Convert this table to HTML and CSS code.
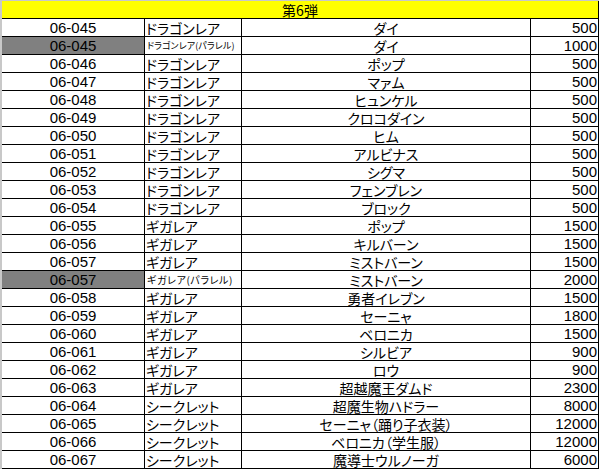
FILE: index.html
```
<!DOCTYPE html>
<html lang="ja">
<head>
<meta charset="utf-8">
<link rel="stylesheet" href="styles.css">
</head>
<body>
<div class="frame">
<div class="head">第6弾</div>
<div class="row"><div class="no">06-045</div><div class="rar">ドラゴンレア</div><div class="name">ダイ</div><div class="pr">500</div></div>
<div class="row"><div class="no par">06-045</div><div class="rar xs">ドラゴンレア(パラレル)</div><div class="name">ダイ</div><div class="pr">1000</div></div>
<div class="row"><div class="no">06-046</div><div class="rar">ドラゴンレア</div><div class="name">ポップ</div><div class="pr">500</div></div>
<div class="row"><div class="no">06-047</div><div class="rar">ドラゴンレア</div><div class="name">マァム</div><div class="pr">500</div></div>
<div class="row"><div class="no">06-048</div><div class="rar">ドラゴンレア</div><div class="name">ヒュンケル</div><div class="pr">500</div></div>
<div class="row"><div class="no">06-049</div><div class="rar">ドラゴンレア</div><div class="name">クロコダイン</div><div class="pr">500</div></div>
<div class="row"><div class="no">06-050</div><div class="rar">ドラゴンレア</div><div class="name">ヒム</div><div class="pr">500</div></div>
<div class="row"><div class="no">06-051</div><div class="rar">ドラゴンレア</div><div class="name">アルビナス</div><div class="pr">500</div></div>
<div class="row"><div class="no">06-052</div><div class="rar">ドラゴンレア</div><div class="name">シグマ</div><div class="pr">500</div></div>
<div class="row"><div class="no">06-053</div><div class="rar">ドラゴンレア</div><div class="name">フェンブレン</div><div class="pr">500</div></div>
<div class="row"><div class="no">06-054</div><div class="rar">ドラゴンレア</div><div class="name">ブロック</div><div class="pr">500</div></div>
<div class="row"><div class="no">06-055</div><div class="rar">ギガレア</div><div class="name">ポップ</div><div class="pr">1500</div></div>
<div class="row"><div class="no">06-056</div><div class="rar">ギガレア</div><div class="name">キルバーン</div><div class="pr">1500</div></div>
<div class="row"><div class="no">06-057</div><div class="rar">ギガレア</div><div class="name">ミストバーン</div><div class="pr">1500</div></div>
<div class="row"><div class="no par">06-057</div><div class="rar sm">ギガレア(パラレル)</div><div class="name">ミストバーン</div><div class="pr">2000</div></div>
<div class="row"><div class="no">06-058</div><div class="rar">ギガレア</div><div class="name">勇者イレブン</div><div class="pr">1500</div></div>
<div class="row"><div class="no">06-059</div><div class="rar">ギガレア</div><div class="name">セーニャ</div><div class="pr">1800</div></div>
<div class="row"><div class="no">06-060</div><div class="rar">ギガレア</div><div class="name">ベロニカ</div><div class="pr">1500</div></div>
<div class="row"><div class="no">06-061</div><div class="rar">ギガレア</div><div class="name">シルビア</div><div class="pr">900</div></div>
<div class="row"><div class="no">06-062</div><div class="rar">ギガレア</div><div class="name">ロウ</div><div class="pr">900</div></div>
<div class="row"><div class="no">06-063</div><div class="rar">ギガレア</div><div class="name">超越魔王ダムド</div><div class="pr">2300</div></div>
<div class="row"><div class="no">06-064</div><div class="rar">シークレット</div><div class="name">超魔生物ハドラー</div><div class="pr">8000</div></div>
<div class="row"><div class="no">06-065</div><div class="rar">シークレット</div><div class="name">セーニャ（踊り子衣装）</div><div class="pr">12000</div></div>
<div class="row"><div class="no">06-066</div><div class="rar">シークレット</div><div class="name">ベロニカ（学生服）</div><div class="pr">12000</div></div>
<div class="row"><div class="no">06-067</div><div class="rar">シークレット</div><div class="name">魔導士ウルノーガ</div><div class="pr">6000</div></div>
</div>
</body>
</html>
```
FILE: styles.css
```
html, body {
  margin: 0;
  padding: 0;
  background: #ffffff;
}
body {
  font-family: "Noto Sans CJK JP", "Liberation Sans", sans-serif;
  color: #000000;
  overflow: hidden;
}
.frame {
  border-left: 2px solid #c8c8c8;
  border-top: 1px solid #c8c8c8;
  width: 597px;
  font-size: 14px;
  line-height: 1;
  font-feature-settings: "palt";
}
.head {
  box-sizing: border-box;
  height: 18px;
  background: #ffff00;
  border-right: 1px solid #000;
  border-bottom: 1px solid #000;
  display: flex;
  align-items: center;
  justify-content: center;
}
.row {
  display: grid;
  grid-template-columns: 143px 97px 289px 68px;
  grid-template-rows: 18px;
  height: 18px;
}
.row > div {
  box-sizing: border-box;
  height: 18px;
  border-right: 1px solid #000;
  border-bottom: 1px solid #000;
  display: flex;
  align-items: center;
  white-space: nowrap;
}
.no {
  justify-content: center;
  font-family: "Liberation Sans", "Noto Sans CJK JP", sans-serif;
  font-size: 15px;
}
.par {
  background: #808080;
}
.rar {
  justify-content: flex-start;
  padding-left: 1px;
}
.sm {
  font-size: 10px;
  letter-spacing: 0.6px;
  padding-left: 2px;
}
.xs {
  font-size: 9px;
  letter-spacing: 0.1px;
  padding-left: 2px;
}
.name {
  justify-content: center;
}
.pr {
  justify-content: flex-end;
  padding-right: 1px;
  font-family: "Liberation Sans", "Noto Sans CJK JP", sans-serif;
  font-size: 15px;
}
```
